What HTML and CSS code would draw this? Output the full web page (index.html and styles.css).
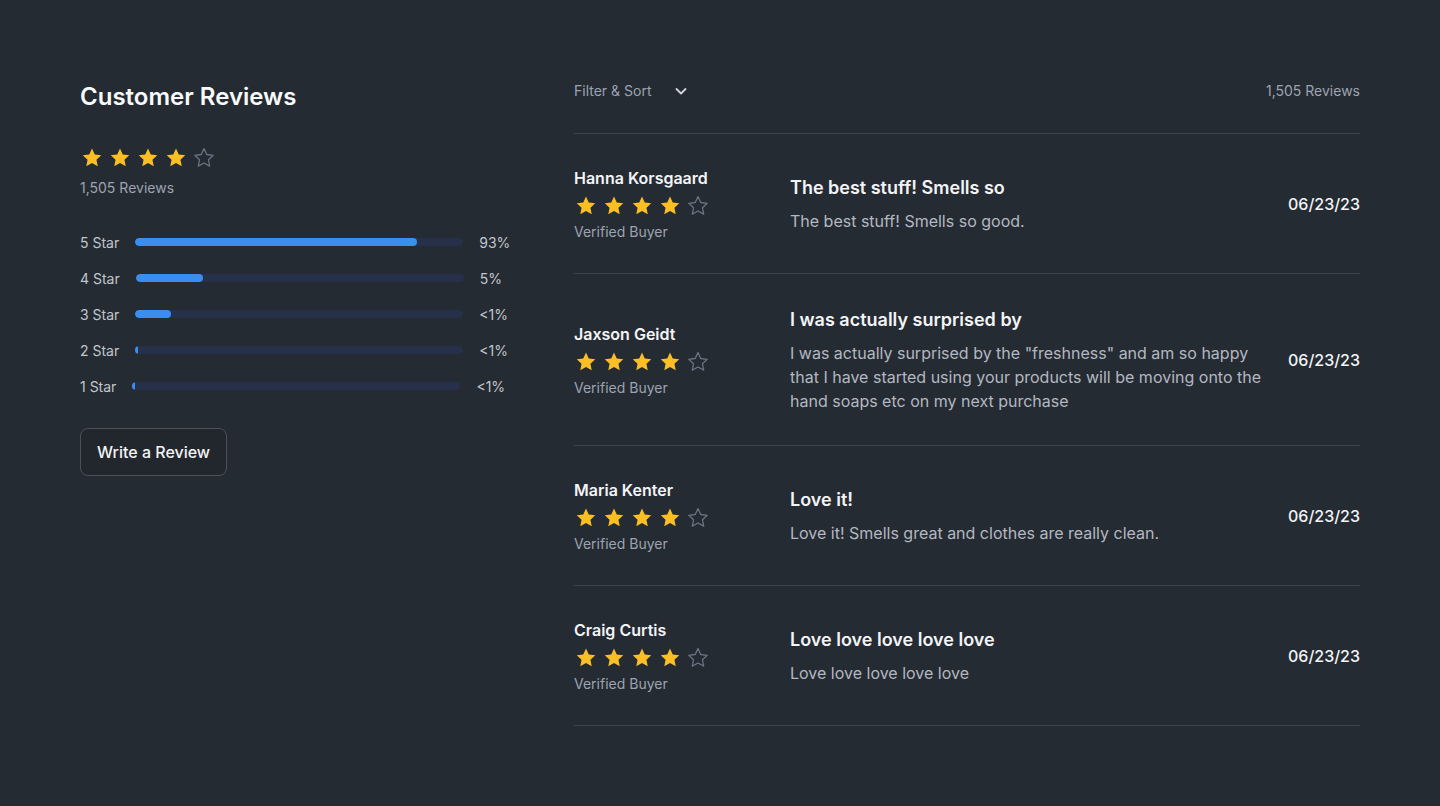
FILE: index.html
```html
<!DOCTYPE html>
<html lang="en">
<head>
<meta charset="utf-8">
<title>Customer Reviews</title>
<link rel="stylesheet" href="styles.css">
</head>
<body>
<svg width="0" height="0" class="defs" aria-hidden="true">
  <defs>
    <path id="star" d="M12 2.6l2.76 5.92 6.48.78-4.78 4.45 1.25 6.41L12 16.97l-5.71 3.19 1.25-6.41-4.78-4.45 6.48-.78z"/>
  </defs>
</svg>
<main class="page">
  <section class="summary">
    <h2 class="title">Customer Reviews</h2>
    <div class="stars stars-summary">
      <svg class="star on" viewBox="0 0 24 24"><use href="#star"/></svg>
      <svg class="star on" viewBox="0 0 24 24"><use href="#star"/></svg>
      <svg class="star on" viewBox="0 0 24 24"><use href="#star"/></svg>
      <svg class="star on" viewBox="0 0 24 24"><use href="#star"/></svg>
      <svg class="star off" viewBox="0 0 24 24"><use href="#star"/></svg>
    </div>
    <p class="count">1,505 Reviews</p>
    <ul class="bars">
      <li class="bar-row"><span class="bar-label">5 Star</span><span class="track"><span class="fill" style="width:282px"></span></span><span class="pct">93%</span></li>
      <li class="bar-row"><span class="bar-label">4 Star</span><span class="track"><span class="fill" style="width:67px"></span></span><span class="pct">5%</span></li>
      <li class="bar-row"><span class="bar-label">3 Star</span><span class="track"><span class="fill" style="width:36px"></span></span><span class="pct">&lt;1%</span></li>
      <li class="bar-row"><span class="bar-label">2 Star</span><span class="track"><span class="fill" style="width:3px"></span></span><span class="pct">&lt;1%</span></li>
      <li class="bar-row"><span class="bar-label">1 Star</span><span class="track"><span class="fill" style="width:3px"></span></span><span class="pct">&lt;1%</span></li>
    </ul>
    <button class="write-btn" type="button">Write a Review</button>
  </section>

  <section class="reviews">
    <div class="reviews-head">
      <button class="filter" type="button">Filter &amp; Sort
        <svg class="chev" viewBox="0 0 20 20" fill="none" stroke="currentColor" stroke-width="1.8" stroke-linecap="round" stroke-linejoin="round"><path d="M5.5 8l4.5 4.5L14.5 8"/></svg>
      </button>
      <span class="head-count">1,505 Reviews</span>
    </div>

    <article class="review">
      <div class="author">
        <p class="name">Hanna Korsgaard</p>
        <div class="stars">
          <svg class="star on" viewBox="0 0 24 24"><use href="#star"/></svg>
          <svg class="star on" viewBox="0 0 24 24"><use href="#star"/></svg>
          <svg class="star on" viewBox="0 0 24 24"><use href="#star"/></svg>
          <svg class="star on" viewBox="0 0 24 24"><use href="#star"/></svg>
          <svg class="star off" viewBox="0 0 24 24"><use href="#star"/></svg>
        </div>
        <p class="verified">Verified Buyer</p>
      </div>
      <div class="body">
        <h3 class="r-title">The best stuff! Smells so</h3>
        <p class="r-text">The best stuff! Smells so good.</p>
      </div>
      <time class="date">06/23/23</time>
    </article>

    <article class="review">
      <div class="author">
        <p class="name">Jaxson Geidt</p>
        <div class="stars">
          <svg class="star on" viewBox="0 0 24 24"><use href="#star"/></svg>
          <svg class="star on" viewBox="0 0 24 24"><use href="#star"/></svg>
          <svg class="star on" viewBox="0 0 24 24"><use href="#star"/></svg>
          <svg class="star on" viewBox="0 0 24 24"><use href="#star"/></svg>
          <svg class="star off" viewBox="0 0 24 24"><use href="#star"/></svg>
        </div>
        <p class="verified">Verified Buyer</p>
      </div>
      <div class="body">
        <h3 class="r-title">I was actually surprised by</h3>
        <p class="r-text">I was actually surprised by the "freshness" and am so happy that I have started using your products will be moving onto the hand soaps etc on my next purchase</p>
      </div>
      <time class="date">06/23/23</time>
    </article>

    <article class="review">
      <div class="author">
        <p class="name">Maria Kenter</p>
        <div class="stars">
          <svg class="star on" viewBox="0 0 24 24"><use href="#star"/></svg>
          <svg class="star on" viewBox="0 0 24 24"><use href="#star"/></svg>
          <svg class="star on" viewBox="0 0 24 24"><use href="#star"/></svg>
          <svg class="star on" viewBox="0 0 24 24"><use href="#star"/></svg>
          <svg class="star off" viewBox="0 0 24 24"><use href="#star"/></svg>
        </div>
        <p class="verified">Verified Buyer</p>
      </div>
      <div class="body">
        <h3 class="r-title">Love it!</h3>
        <p class="r-text">Love it! Smells great and clothes are really clean.</p>
      </div>
      <time class="date">06/23/23</time>
    </article>

    <article class="review">
      <div class="author">
        <p class="name">Craig Curtis</p>
        <div class="stars">
          <svg class="star on" viewBox="0 0 24 24"><use href="#star"/></svg>
          <svg class="star on" viewBox="0 0 24 24"><use href="#star"/></svg>
          <svg class="star on" viewBox="0 0 24 24"><use href="#star"/></svg>
          <svg class="star on" viewBox="0 0 24 24"><use href="#star"/></svg>
          <svg class="star off" viewBox="0 0 24 24"><use href="#star"/></svg>
        </div>
        <p class="verified">Verified Buyer</p>
      </div>
      <div class="body">
        <h3 class="r-title">Love love love love love</h3>
        <p class="r-text">Love love love love love</p>
      </div>
      <time class="date">06/23/23</time>
    </article>
  </section>
</main>
</body>
</html>
```

FILE: styles.css
```css
* { box-sizing: border-box; }
html, body { margin: 0; padding: 0; }
body {
  background: #252b33;
  color: #f3f4f6;
  font-family: Inter, "Noto Sans", "Liberation Sans", sans-serif;
  min-height: 806px;
}
p, h2, h3, ul { margin: 0; padding: 0; }
.defs { position: absolute; }

.page {
  display: grid;
  grid-template-columns: 430px 1fr;
  column-gap: 64px;
  padding: 72px 80px 80px;
  align-items: start;
}

/* summary */
.summary { padding-top: 9px; display: flex; flex-direction: column; align-items: flex-start; }
.title { font-size: 24px; line-height: 32px; font-weight: 600; color: #f9fafb; }
.stars { display: flex; gap: 4px; }
.stars-summary { margin-top: 33px; }
.star { width: 24px; height: 24px; display: block; }
.star.on { fill: #fbbf24; }
.star.off { fill: none; stroke: #6b7280; stroke-width: 1.3; stroke-linejoin: round; }
.count { margin-top: 8px; font-size: 14px; line-height: 20px; color: #9ca3af; }

.bars { list-style: none; margin-top: 34px; display: flex; flex-direction: column; gap: 16px; }
.bar-row { display: flex; align-items: center; gap: 16px; height: 20px; font-size: 14px; color: #c2c6cc; }
.bar-label { white-space: nowrap; }
.track { width: 328px; height: 8px; border-radius: 4px; background: #26304a; display: block; overflow: hidden; }
.fill { display: block; height: 8px; border-radius: 4px; background: #3b8ef0; }
.pct { white-space: nowrap; }

.write-btn {
  margin-top: 32px;
  height: 48px;
  padding: 0 16px;
  background: #22272e;
  border: 1px solid #4b515a;
  border-radius: 8px;
  color: #f3f4f6;
  font-family: inherit;
  font-size: 16px;
  font-weight: 500;
}

/* reviews */
.reviews { display: flex; flex-direction: column; }
.reviews-head {
  display: flex;
  align-items: center;
  justify-content: space-between;
  height: 62px;
  padding-bottom: 24px;
  border-bottom: 1px solid #3e444c;
}
.filter {
  display: flex; align-items: center; gap: 20px;
  background: none; border: 0; padding: 0;
  color: #9ca3af; font-family: inherit; font-size: 14px; line-height: 20px;
}
.chev { width: 20px; height: 20px; color: #d1d5db; }
.head-count { font-size: 14px; line-height: 20px; color: #9ca3af; }

.review {
  display: grid;
  grid-template-columns: 200px 1fr auto;
  column-gap: 16px;
  align-items: center;
  padding: 32px 0;
  border-bottom: 1px solid #3e444c;
}
.author { display: flex; flex-direction: column; }
.name { font-size: 16px; line-height: 24px; font-weight: 600; color: #f3f4f6; }
.author .stars { margin-top: 4px; }
.verified { margin-top: 4px; font-size: 14px; line-height: 19px; color: #9ca3af; }
.body { display: flex; flex-direction: column; }
.r-title { font-size: 18px; line-height: 28px; font-weight: 600; color: #f3f4f6; }
.r-text { margin-top: 7px; font-size: 16px; line-height: 24px; color: #b3b8c0; }
.date { font-size: 16px; line-height: 24px; font-weight: 500; color: #f3f4f6; text-align: right; }
```
